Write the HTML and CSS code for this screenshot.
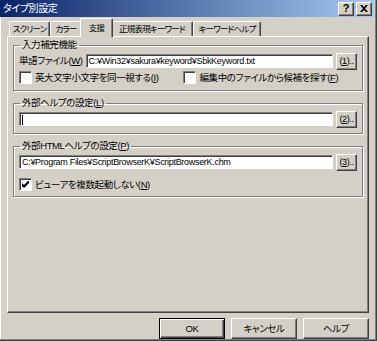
FILE: index.html
```html
<!DOCTYPE html>
<html lang="ja">
<head>
  <meta charset="UTF-8">
  <title>タイプ別設定</title>
  <link rel="stylesheet" href="styles.css">
</head>
<body>
  <div class="window">
    <div class="titlebar">
      <span class="title">タイプ別設定</span>
      <div class="caption-buttons">
        <span class="cap-btn">?</span>
        <span class="cap-btn">
          <svg width="8" height="7" viewBox="0 0 8 7"><path d="M0 0h2l2 2 2-2h2L5 3.5 8 7H6L4 5 2 7H0l3-3.5z" fill="#000"/></svg>
        </span>
      </div>
    </div>

    <div class="tabs">
      <span class="tab w41">スクリーン</span>
      <span class="tab w32">カラー</span>
      <span class="tab active">支援</span>
      <span class="tab w82">正規表現キーワード</span>
      <span class="tab w68">キーワードヘルプ</span>
    </div>

    <div class="panel">
      <fieldset class="group">
        <legend>入力補完機能</legend>
        <div class="row">
          <span class="label">単語ファイル(<u>W</u>)</span>
          <div class="field">C:¥Win32¥sakura¥keyword¥SbkKeyword.txt</div>
          <span class="btn small">(<u>1</u>)..</span>
        </div>
        <div class="row checks">
          <label class="check"><span class="box"></span><span>英大文字小文字を同一視する(<u>I</u>)</span></label>
          <label class="check second"><span class="box"></span><span>編集中のファイルから候補を探す(<u>F</u>)</span></label>
        </div>
      </fieldset>

      <fieldset class="group">
        <legend>外部ヘルプの設定(<u>L</u>)</legend>
        <div class="row">
          <div class="field"><span class="caret"></span></div>
          <span class="btn small">(<u>2</u>)..</span>
        </div>
      </fieldset>

      <fieldset class="group">
        <legend>外部HTMLヘルプの設定(<u>P</u>)</legend>
        <div class="row">
          <div class="field">C:¥Program Files¥ScriptBrowserK¥ScriptBrowserK.chm</div>
          <span class="btn small">(<u>3</u>)..</span>
        </div>
        <div class="row checks tall">
          <label class="check"><span class="box"><svg width="7" height="7" viewBox="0 0 7 7"><path d="M0 2v3l2 2 5-5V-1L2 4z" fill="#000"/></svg></span><span>ビューアを複数起動しない(<u>N</u>)</span></label>
        </div>
      </fieldset>
    </div>

    <div class="actions">
      <span class="btn default">OK</span>
      <span class="btn">キャンセル</span>
      <span class="btn">ヘルプ</span>
    </div>
  </div>
</body>
</html>
```

FILE: styles.css
```css
body {
  margin: 0;
  background: #d4d0c8;
  font-family: "Liberation Sans", "Noto Sans CJK JP", sans-serif;
  font-size: 9.5px;
  line-height: 12px;
  letter-spacing: -0.4px;
  font-feature-settings: "palt";
  color: #000;
}
u {
  text-decoration: underline;
  text-underline-offset: 1px;
}
.window {
  width: 377px;
  height: 341px;
  box-sizing: border-box;
  background: #d4d0c8;
  border-right: 1px solid #404040;
  border-bottom: 1px solid #404040;
  box-shadow: inset -1px -1px 0 #808080, inset 1px 0 0 #fff;
  padding-right: 2px;
}
.titlebar {
  height: 17px;
  display: flex;
  align-items: center;
  justify-content: space-between;
  background: linear-gradient(to right, #0a246a, #a6caf0);
  padding: 0 2px 0 3px;
}
.title {
  color: #fff;
  font-size: 10px;
}
.caption-buttons {
  display: flex;
  gap: 2px;
}
.cap-btn {
  width: 16px;
  height: 14px;
  box-sizing: border-box;
  display: flex;
  align-items: center;
  justify-content: center;
  background: #d4d0c8;
  border: 1px solid;
  border-color: #fff #404040 #404040 #fff;
  box-shadow: inset -1px -1px 0 #808080;
  font-weight: bold;
  font-size: 11px;
  line-height: 1;
  letter-spacing: 0;
}
.tabs {
  display: flex;
  align-items: flex-end;
  height: 19px;
  padding-left: 9px;
  position: relative;
  z-index: 1;
}
.tab {
  height: 15px;
  box-sizing: border-box;
  padding: 0 1px;
  display: flex;
  align-items: center;
  justify-content: center;
  white-space: nowrap;
  font-size: 8.5px;
  letter-spacing: -0.8px;
  border-top: 1px solid #fff;
  border-left: 1px solid #fff;
  border-right: 1px solid #404040;
  box-shadow: inset -1px 0 0 #808080;
  border-radius: 2px 2px 0 0;
}
.w41 { min-width: 41px; }
.w32 { min-width: 32px; }
.w82 { min-width: 82px; }
.w68 { min-width: 68px; }
.tab.active {
  min-width: 33px;
  height: 19px;
  margin: 0 -2px -1px;
  background: #d4d0c8;
  position: relative;
}
.panel {
  height: 277px;
  margin: 0 5px 0 7px;
  box-sizing: border-box;
  border: 1px solid;
  border-color: #fff #404040 #404040 #fff;
  box-shadow: inset -1px -1px 0 #808080;
  padding: 2px 5px 0 5px;
}
.group {
  min-width: 0;
  margin: 0 0 6px;
  padding: 1px 5px 5px 5px;
  border: 1px solid #808080;
  box-shadow: inset 1px 1px 0 #fff, 1px 1px 0 #fff;
}
.group legend {
  padding: 0 2px;
  margin-left: 1px;
  white-space: nowrap;
}
.row {
  display: flex;
  align-items: center;
  gap: 2px;
  height: 18px;
}
.label {
  flex: none;
  white-space: nowrap;
  margin-right: 1px;
}
.field {
  flex: 1;
  height: 14px;
  box-sizing: border-box;
  background: #fff;
  border: 1px solid;
  border-color: #808080 #fff #fff #808080;
  box-shadow: inset 1px 1px 0 #404040;
  padding: 0 2px;
  font-size: 9px;
  letter-spacing: -0.3px;
  line-height: 12px;
  white-space: nowrap;
  overflow: hidden;
}
.caret {
  display: inline-block;
  width: 1px;
  height: 10px;
  background: #000;
  vertical-align: middle;
}
.btn {
  height: 21px;
  width: 66px;
  box-sizing: border-box;
  display: flex;
  align-items: center;
  justify-content: center;
  white-space: nowrap;
  border: 1px solid;
  border-color: #fff #404040 #404040 #fff;
  box-shadow: inset -1px -1px 0 #808080;
}
.btn.small {
  width: 21px;
  height: 17px;
  margin-left: 1px;
  font-size: 9px;
}
.btn.default {
  border: 1px solid #000;
  box-shadow: inset 1px 1px 0 #fff, inset -1px -1px 0 #404040, inset -2px -2px 0 #808080;
}
.checks {
  height: 15px;
}
.checks.tall {
  height: 20px;
  align-items: flex-end;
}
.check {
  display: flex;
  align-items: center;
  gap: 3px;
  white-space: nowrap;
}
.check.second {
  margin-left: 23px;
}
.box {
  width: 13px;
  height: 13px;
  box-sizing: border-box;
  background: #fff;
  border: 1px solid;
  border-color: #808080 #fff #fff #808080;
  box-shadow: inset 1px 1px 0 #404040;
  display: flex;
  align-items: center;
  justify-content: center;
}
.actions {
  display: flex;
  justify-content: flex-end;
  gap: 6px;
  padding: 5px 5px 0 0;
}
```
